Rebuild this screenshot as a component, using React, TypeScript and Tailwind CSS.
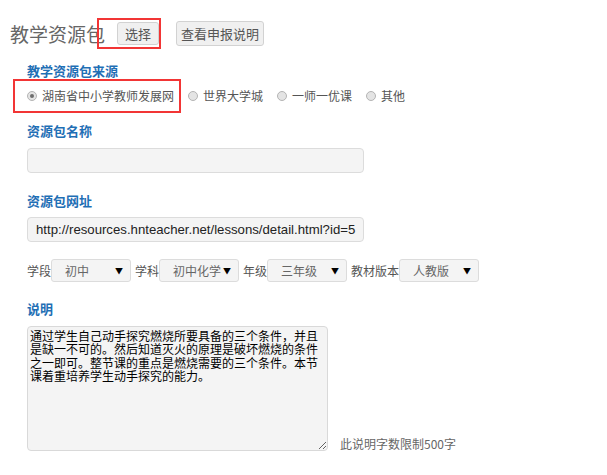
import { useState } from "react";

const sources = ["湖南省中小学教师发展网", "世界大学城", "一师一优课", "其他"];

const selects = [
    { label: "学段", value: "初中" },
    { label: "学科", value: "初中化学" },
    { label: "年级", value: "三年级" },
    { label: "教材版本", value: "人教版" },
];

const intro =
    "通过学生自己动手探究燃烧所要具备的三个条件，并且是缺一不可的。然后知道灭火的原理是破坏燃烧的条件之一即可。整节课的重点是燃烧需要的三个条件。本节课着重培养学生动手探究的能力。";

function Radio({ checked }: { checked: boolean }) {
    return (
        <span className="w-[10px] h-[10px] rounded-full border border-[#b4b4b4] bg-[#e4e4e4] flex items-center justify-center shrink-0">
            {checked && <span className="w-[4px] h-[4px] rounded-full bg-[#6e6e6e]" />}
        </span>
    );
}

function Label({ text, className = "" }: { text: string; className?: string }) {
    return <div className={"h-[16px] leading-[16px] text-[13px] font-bold text-[#1f6fb5] " + className}>{text}</div>;
}

const App = () => {
    const [source, setSource] = useState(0);

    return (
        <div className="relative w-[607px] h-[475px] bg-white text-[#555] font-['Microsoft_YaHei','Noto_Sans_CJK_SC',sans-serif] overflow-hidden">
            <div className="mt-[21px] h-[25px] pl-[10px] flex items-center">
                <span className="text-[19px] leading-[25px] text-[#666]">教学资源包</span>
                <button className="ml-[12px] w-[42px] h-[23px] bg-[#f0f0f0] border border-[#d2d2d2] rounded-[3px] text-[13px] text-[#555]">
                    选择
                </button>
                <button className="ml-[17px] w-[88px] h-[25px] bg-[#f0f0f0] border border-[#d2d2d2] rounded-[3px] text-[13px] text-[#555]">
                    查看申报说明
                </button>
            </div>

            <div className="pl-[27px]">
                <Label text="教学资源包来源" className="mt-[17px]" />

                <div className="mt-[7px] h-[20px] flex items-center text-[12px]">
                    {sources.map((s, i) => (
                        <label
                            key={s}
                            className={"flex items-center gap-[5px] cursor-pointer " + (i === 0 ? "" : "ml-[14px]")}
                            onClick={() => setSource(i)}
                        >
                            <Radio checked={source === i} />
                            <span>{s}</span>
                        </label>
                    ))}
                </div>

                <Label text="资源包名称" className="mt-[17px]" />
                <input
                    readOnly
                    className="mt-[9px] block w-[337px] h-[25px] bg-[#f4f4f4] border border-[#dcdcdc] rounded-[4px] outline-none"
                />

                <Label text="资源包网址" className="mt-[20px]" />
                <input
                    readOnly
                    value="http://resources.hnteacher.net/lessons/detail.html?id=5"
                    className="mt-[8px] block w-[337px] h-[25px] pl-[8px] bg-[#f4f4f4] border border-[#dcdcdc] rounded-[4px] outline-none text-[13.2px] text-[#222] font-['Liberation_Sans',sans-serif]"
                />

                <div className="mt-[17px] h-[23px] flex items-center text-[12px]">
                    {selects.map((s, i) => (
                        <div key={s.label} className={"flex items-center " + (i === 0 ? "" : "ml-[4px]")}>
                            <span>{s.label}</span>
                            <div className="w-[80px] h-[23px] bg-[#f4f4f4] border border-[#dcdcdc] rounded-[3px] flex items-center justify-between pl-[13px] pr-[7px] text-[12px] text-[#666] whitespace-nowrap">
                                <span>{s.value}</span>
                                <span className="text-[8px] text-black">▼</span>
                            </div>
                        </div>
                    ))}
                </div>

                <Label text="说明" className="mt-[19px]" />
                <div className="mt-[9px] flex items-end">
                    <textarea
                        readOnly
                        defaultValue={intro}
                        className="block w-[301px] h-[125px] px-[2px] py-[2px] bg-[#f4f4f4] border border-[#d9d9d9] rounded-[4px] outline-none text-[12px] leading-[13.4px] text-black"
                    />
                    <span className="ml-[12px] text-[12px] leading-[14px] text-[#666]">此说明字数限制500字</span>
                </div>
            </div>

            <div className="absolute left-[97px] top-[18px] w-[64px] h-[31px] border-2 border-[#f23535]" />
            <div className="absolute left-[13px] top-[79px] w-[168px] h-[34px] border-2 border-[#f23535]" />
        </div>
    );
};

export default App;
